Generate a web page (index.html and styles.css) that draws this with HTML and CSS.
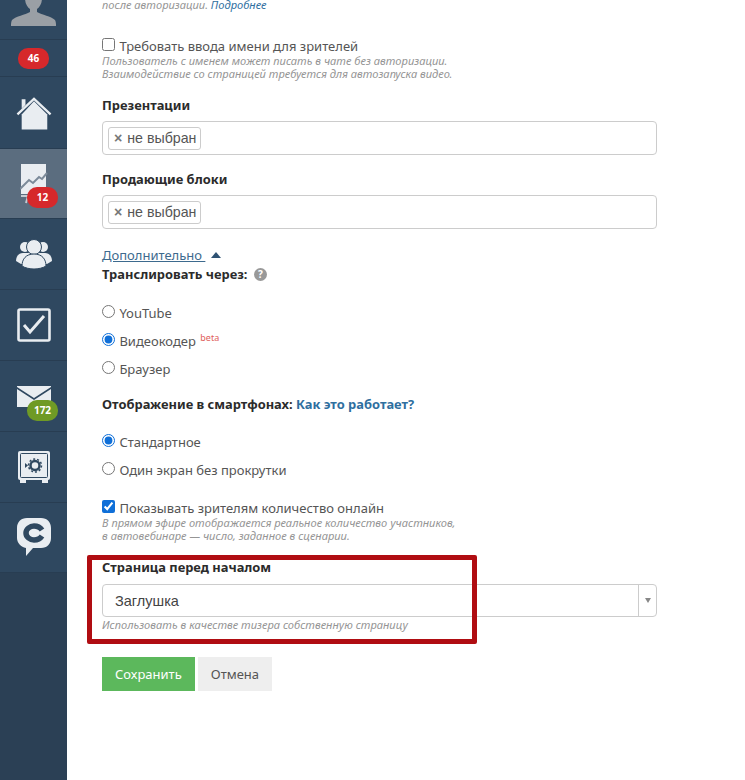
FILE: index.html
```html
<!doctype html>
<html lang="ru">
  <head>
    <meta charset="UTF-8">
    <meta name="viewport" content="width=device-width, initial-scale=1.0">
    <title>Настройки вебинара</title>
    <link rel="stylesheet" href="styles.css">
  </head>
  <body>
    <div class="layout">
      <!-- Side menu -->
      <nav class="sidebar">
        <div class="side-item side-avatar">
          <svg width="48" height="28" viewBox="0 0 48 28"><path fill="#9a9fa5" d="M15 0h17c0 5-2 9-5 11v3c5 3 14 4 18 8 1 2 1 4 1 6H1c0-2 0-4 1-6 4-4 13-5 18-8v-3c-3-2-5-6-5-11z"/></svg>
        </div>
        <div class="side-item side-count"><span class="badge badge-red">46</span></div>
        <div class="side-item side-home">
          <svg width="36" height="35" viewBox="0 0 38 36"><path fill="#e9edf1" d="M19 5 33 19v16H6V19z"/><path fill="none" stroke="#e9edf1" stroke-width="2.400" d="M1.500 19 19 2.500 36.500 19"/><path fill="#e9edf1" d="M6 3h4v6l-4 4z"/></svg>
        </div>
        <div class="side-item side-active">
          <svg width="28" height="44" viewBox="0 0 28 44"><path fill="#e9edf1" d="M1 0h25v30H1z"/><path fill="none" stroke="#7b8a99" stroke-width="2" d="M0 25 9 16l4 3 6-6 3 2 5-6"/><path fill="none" stroke="#c4cbd2" stroke-width="2" d="M1 32h14M8 32l-2 7"/></svg>
          <span class="badge badge-red badge-over">12</span>
        </div>
        <div class="side-item">
          <svg width="36" height="30" viewBox="0 0 36 30"><g fill="#e9edf1"><circle cx="9" cy="8" r="5"/><circle cx="27" cy="8" r="5"/><path d="M0 22c0-5 3-8 7-8h22c4 0 7 3 7 8l-5 3H5z"/></g><circle cx="18" cy="8" r="7.500" fill="#e9edf1" stroke="#2f4860"/><path fill="#e9edf1" stroke="#2f4860" d="M6 27c0-7 4-12 12-12s12 5 12 12c-3 2-8 3-12 3s-9-1-12-3z"/></svg>
        </div>
        <div class="side-item">
          <svg width="34" height="34" viewBox="0 0 34 34"><rect x="1.500" y="1.500" width="31" height="31" rx="1.500" fill="none" stroke="#e9edf1" stroke-width="2.600"/><path fill="none" stroke="#e9edf1" stroke-width="3" d="M7 17l6 7L27 8"/></svg>
        </div>
        <div class="side-item side-mail">
          <svg width="34" height="21" viewBox="0 0 34 21"><path fill="#e9edf1" d="M0 0h34v1L17 12 0 1zM0 3l17 11L34 3v18H0z"/></svg>
          <span class="badge badge-green badge-over">172</span>
        </div>
        <div class="side-item">
          <svg width="34" height="34" viewBox="0 0 34 34"><rect x="1" y="1" width="32" height="29" rx="2" fill="#e9edf1"/><rect x="3.500" y="3.500" width="27" height="24" rx="1" fill="none" stroke="#2f4860"/><path fill="#e9edf1" d="M3 30h6v3H3zM25 30h6v3h-6z"/><circle cx="18" cy="15.500" r="4.500" fill="none" stroke="#2f4860" stroke-width="2.500"/><circle cx="18" cy="15.500" r="6.500" fill="none" stroke="#2f4860" stroke-width="1.500" stroke-dasharray="2 2"/><path fill="#2f4860" d="M8 13l3 2.500L8 18z"/></svg>
        </div>
        <div class="side-item side-last">
          <svg width="34" height="39" viewBox="0 0 34 39"><path fill="#e9edf1" d="M10 0h14c6 0 10 4 10 10v10c0 6-4 10-10 10h-8l-7 8v-8c-5-1-9-5-9-10V10C0 4 4 0 10 0z"/><path fill="none" stroke="#2f4860" stroke-width="5.500" d="M25 12c-2-3-5-4-8-4-4 0-8 3-8 7s4 7 8 7c3 0 6-1 8-4"/></svg>
        </div>
      </nav>

      <main class="content">
        <p class="hint hint-top">Пользователь должен будет ввести имя и адрес электронной почты<br>после авторизации. <a href="#">Подробнее</a></p>

        <label class="check check-first"><input type="checkbox"> Требовать ввода имени для зрителей</label>
        <p class="hint">Пользователь с именем может писать в чате без авторизации.<br>Взаимодействие со страницей требуется для автозапуска видео.</p>

        <h4 class="field-title title-pres">Презентации</h4>
        <div class="tag-box"><span class="tag"><i>×</i> не выбран</span></div>

        <h4 class="field-title title-blocks">Продающие блоки</h4>
        <div class="tag-box"><span class="tag"><i>×</i> не выбран</span></div>

        <a href="#" class="more"><span>Дополнительно&nbsp;</span> <b class="arrow-up"></b></a>

        <h4 class="field-title title-through">Транслировать через: <span class="help">?</span></h4>
        <div class="radios">
          <label class="check"><input type="radio" name="via"> YouTube</label>
          <label class="check"><input type="radio" name="via" checked> Видеокодер <sup>beta</sup></label>
          <label class="check"><input type="radio" name="via"> Браузер</label>
        </div>

        <h4 class="field-title title-phones">Отображение в смартфонах: <a href="#">Как это работает?</a></h4>
        <div class="radios radios-phones">
          <label class="check"><input type="radio" name="mobile" checked> Стандартное</label>
          <label class="check"><input type="radio" name="mobile"> Один экран без прокрутки</label>
        </div>

        <label class="check check-online"><input type="checkbox" checked> Показывать зрителям количество онлайн</label>
        <p class="hint">В прямом эфире отображается реальное количество участников,<br>в автовебинаре — число, заданное в сценарии.</p>

        <div class="start-page">
          <h4 class="field-title">Страница перед началом</h4>
          <div class="select"><span>Заглушка</span><em><b class="arrow-down"></b></em></div>
          <p class="hint">Использовать в качестве тизера собственную страницу</p>
          <div class="red-frame"></div>
        </div>

        <div class="buttons">
          <button class="btn btn-save">Сохранить</button>
          <button class="btn btn-cancel">Отмена</button>
        </div>
      </main>
    </div>
  </body>
</html>
```

FILE: styles.css
```css
html, body {
  margin: 0;
  height: 780px;
  overflow: hidden;
  background: #fff;
}
body {
  font-family: "Noto Sans", "Open Sans", sans-serif;
  font-size: 13px;
  color: #333;
}
.layout {
  display: flex;
  height: 780px;
}

/* side menu */
.sidebar {
  width: 67px;
  flex: none;
  background: #2b4055;
}
.side-item {
  position: relative;
  height: 70px;
  border-bottom: 1px solid #283d52;
  background: #2f4860;
  display: flex;
  align-items: center;
  justify-content: center;
}
.side-avatar {
  height: 40px;
  align-items: flex-end;
  padding-bottom: 13px;
  box-sizing: border-box;
}
.side-count {
  height: 36px;
}
.side-home {
  height: 71px;
}
.side-home svg {
  margin-top: 2px;
}
.side-active {
  height: 69px;
  background: #5b6d7f;
}
.side-active svg {
  margin-top: 4px;
}
.side-last {
  height: 69px;
}
.side-mail svg {
  margin-top: 1px;
}
.badge {
  display: block;
  font-size: 10px;
  font-weight: 700;
  color: #fff;
  text-align: center;
  border-radius: 10px;
  height: 21px;
  line-height: 21px;
  width: 31px;
}
.badge-red {
  background: #d6282b;
}
.badge-green {
  background: #6f9a25;
}
.badge-over {
  position: absolute;
  left: 27px;
  top: 38px;
}
.side-mail .badge-over {
  top: 39px;
}

/* form column */
.content {
  width: 555px;
  margin-left: 35px;
  margin-top: -13px;
}
.hint {
  margin: -2px 0 0;
  font-size: 11.100px;
  line-height: 13px;
  font-style: italic;
  color: #959595;
}
.hint a, .more, .field-title a {
  color: #2f6f9f;
  text-decoration: none;
}
.check {
  display: block;
  font-size: 13px;
  line-height: 20px;
  color: #555;
}
.check input {
  width: 13px;
  height: 13px;
  margin: 0 1px 0 0;
  accent-color: #0f6fd8;
}
.check-first {
  margin-top: 25px;
}
.field-title {
  margin: 0;
  font-size: 12.900px;
  line-height: 18px;
  font-weight: 700;
  color: #2b2b2b;
}
.title-pres {
  margin-top: 16px;
}
.title-blocks {
  margin-top: 15px;
}
.title-through {
  margin-top: 1px;
}
.title-phones {
  margin-top: 16px;
}
.tag-box {
  margin-top: 7px;
  height: 34px;
  box-sizing: border-box;
  border: 1px solid #ccc;
  border-radius: 4px;
  padding: 5px;
}
.tag {
  display: inline-block;
  height: 23px;
  line-height: 21px;
  box-sizing: border-box;
  border: 1px solid #ccc;
  border-radius: 3px;
  padding: 0 4px 0 5px;
  font-family: "Liberation Sans", sans-serif;
  font-size: 14.200px;
  color: #555;
}
.tag i {
  font-style: normal;
  font-weight: 700;
  color: #777;
  margin-right: 1px;
}
.more {
  display: block;
  margin-top: 17px;
  line-height: 18px;
  font-size: 13px;
  color: #3d6a8e;
}
.more span {
  text-decoration: underline;
}
.arrow-up {
  display: inline-block;
  margin-left: 2px;
  vertical-align: 2px;
  border: 5.500px solid transparent;
  border-top: 0;
  border-bottom: 6px solid #2f5273;
}
.help {
  display: inline-block;
  width: 13px;
  height: 13px;
  margin-left: 3px;
  border-radius: 50%;
  background: #999;
  color: #fff;
  font-size: 10px;
  line-height: 13px;
  text-align: center;
  vertical-align: 1px;
}
.radios {
  margin-top: 20px;
  display: flex;
  flex-direction: column;
  gap: 8px;
}
.radios-phones {
  margin-top: 19px;
}
.check sup {
  font-size: 9px;
  line-height: 0;
  margin-left: 1px;
  color: #e0605c;
}
.check-online {
  margin-top: 18px;
}

/* highlighted block */
.start-page {
  position: relative;
  margin-top: 16px;
}
.select {
  margin-top: 8px;
  height: 33px;
  box-sizing: border-box;
  border: 1px solid #ccc;
  border-radius: 4px;
  display: flex;
  align-items: center;
  font-family: "Liberation Sans", sans-serif;
  font-size: 14.500px;
  color: #444;
}
.select span {
  flex: 1;
  padding-left: 12px;
}
.select em {
  width: 17px;
  height: 100%;
  border-left: 1px solid #ccc;
  display: flex;
  align-items: center;
  justify-content: center;
}
.arrow-down {
  border: 3px solid transparent;
  border-bottom: 0;
  border-top: 5px solid #888;
}
.start-page .hint {
  margin-top: 1px;
}
.red-frame {
  position: absolute;
  left: -15px;
  top: -3px;
  width: 380px;
  height: 79px;
  border: 5px solid #b00d12;
  border-radius: 2px;
}
.buttons {
  margin-top: 26px;
  display: flex;
  gap: 3px;
}
.btn {
  height: 34px;
  border: 0;
  padding: 0 13px;
  font-family: "Noto Sans", sans-serif;
  font-size: 13px;
}
.btn-save {
  background: #5cb85c;
  color: #fff;
}
.btn-cancel {
  background: #eee;
  color: #555;
}
```
